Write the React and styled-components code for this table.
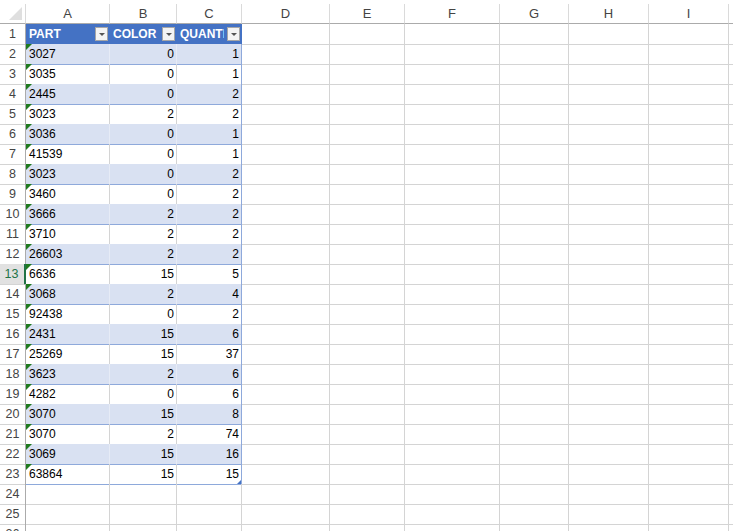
import React from 'react';
import styled, { createGlobalStyle, css } from 'styled-components';

const COLS = '26px 84px 67px 65px 88px 75px 95px 69px 80px 80px 80px';
const LETTERS = ['A', 'B', 'C', 'D', 'E', 'F', 'G', 'H', 'I', ''];

const DATA = [
  ['3027', 0, 1],
  ['3035', 0, 1],
  ['2445', 0, 2],
  ['3023', 2, 2],
  ['3036', 0, 1],
  ['41539', 0, 1],
  ['3023', 0, 2],
  ['3460', 0, 2],
  ['3666', 2, 2],
  ['3710', 2, 2],
  ['26603', 2, 2],
  ['6636', 15, 5],
  ['3068', 2, 4],
  ['92438', 0, 2],
  ['2431', 15, 6],
  ['25269', 15, 37],
  ['3623', 2, 6],
  ['4282', 0, 6],
  ['3070', 15, 8],
  ['3070', 2, 74],
  ['3069', 15, 16],
  ['63864', 15, 15],
];

const ACTIVE_ROW = 13;
const TOTAL_ROWS = 26;

const GlobalStyle = createGlobalStyle`
  html, body {
    margin: 0;
    padding: 0;
    background: #fff;
    overflow: hidden;
  }
  body {
    font-family: "Liberation Sans", Arial, sans-serif;
  }
`;

const Sheet = styled.div`
  width: 733px;
  height: 531px;
  overflow: hidden;
  padding-top: 4px;
  box-sizing: border-box;
  background: #fff;
`;

const Row = styled.div`
  display: grid;
  grid-template-columns: ${COLS};
  height: 20px;
`;

const Corner = styled.div`
  position: relative;
  box-sizing: border-box;
  border-right: 1px solid #dadada;
  border-bottom: 1px solid #ababab;
  &::after {
    content: '';
    position: absolute;
    right: 3px;
    bottom: 3px;
    width: 0;
    height: 0;
    border-left: 13px solid transparent;
    border-bottom: 13px solid #dfdfdf;
  }
`;

const ColHead = styled.div`
  box-sizing: border-box;
  border-right: 1px solid #dadada;
  border-bottom: 1px solid #ababab;
  color: #444;
  font-size: 13px;
  line-height: 19px;
  text-align: center;
`;

const RowHead = styled.div`
  box-sizing: border-box;
  border-right: 1px solid #ababab;
  border-bottom: 1px solid #d4d4d4;
  color: #444;
  font-size: 12.5px;
  line-height: 19px;
  padding-top: 1px;
  text-align: center;
  ${({ $active }) =>
    $active &&
    css`
      background: #e1e1e1;
      color: #217346;
      border-right: 2px solid #217346;
      padding-right: 1px;
    `}
`;

const Cell = styled.div`
  position: relative;
  box-sizing: border-box;
  border-right: 1px solid #d4d4d4;
  border-bottom: 1px solid #d4d4d4;
  font-size: 12px;
  line-height: 18px;
  padding: 1px 3px 0 3px;
  color: #000;
  white-space: nowrap;
  overflow: hidden;
  text-align: ${({ $num }) => ($num ? 'right' : 'left')};
  ${({ $num }) => $num && 'padding-right: 2px;'}
  ${({ $table }) =>
    $table &&
    css`
      border-bottom-color: #8ea9db;
    `}
  ${({ $band }) => $band && 'background: #d9e1f2;'}
  ${({ $band, $table }) => $band && $table && 'border-right-color: #e6ebf6;'}
  ${({ $edge }) => $edge && 'border-right-color: #8ea9db;'}
`;

const HeadCell = styled.div`
  position: relative;
  box-sizing: border-box;
  background: #4472c4;
  border-right: 1px solid #4472c4;
  border-bottom: 1px solid #8ea9db;
  color: #fff;
  font-weight: bold;
  font-size: 12px;
  line-height: 18px;
  padding: 1px 0 0 3px;
`;

const HeadLabel = styled.span`
  display: block;
  margin-right: 17px;
  white-space: nowrap;
  overflow: hidden;
`;

const FilterButton = styled.span`
  position: absolute;
  top: 3px;
  right: 1px;
  width: 13px;
  height: 14px;
  box-sizing: border-box;
  background: #f4f4f4;
  border: 1px solid #a6a6a6;
  display: flex;
  align-items: center;
  justify-content: center;
  &::after {
    content: '';
    width: 0;
    height: 0;
    border-left: 3px solid transparent;
    border-right: 3px solid transparent;
    border-top: 3px solid #555;
  }
`;

const TextFlag = styled.span`
  position: absolute;
  top: 0;
  left: 0;
  width: 0;
  height: 0;
  border-top: 6px solid #1f7a1f;
  border-right: 6px solid transparent;
`;

const ResizeHandle = styled.span`
  position: absolute;
  right: 0;
  bottom: 0;
  width: 0;
  height: 0;
  border-left: 4px solid transparent;
  border-bottom: 4px solid #4472c4;
`;

const emptyCells = (from, key) =>
  LETTERS.slice(from).map((l, i) => <Cell key={`${key}-${i}`} />);

export default function App() {
  const rows = [];

  rows.push(
    <Row key="h">
      <Corner />
      {LETTERS.map((l, i) => (
        <ColHead key={i}>{l}</ColHead>
      ))}
    </Row>
  );

  rows.push(
    <Row key="r1">
      <RowHead>1</RowHead>
      {['PART', 'COLOR', 'QUANTITY'].map((h) => (
        <HeadCell key={h}>
          <HeadLabel>{h}</HeadLabel>
          <FilterButton />
        </HeadCell>
      ))}
      {emptyCells(3, 'r1')}
    </Row>
  );

  DATA.forEach(([part, color, qty], i) => {
    const n = i + 2;
    const band = n % 2 === 0;
    const last = i === DATA.length - 1;
    rows.push(
      <Row key={`r${n}`}>
        <RowHead $active={n === ACTIVE_ROW}>{n}</RowHead>
        <Cell $table $band={band}>
          <TextFlag />
          {part}
        </Cell>
        <Cell $table $band={band} $num>
          {color}
        </Cell>
        <Cell $table $band={band} $num $edge>
          {qty}
          {last && <ResizeHandle />}
        </Cell>
        {emptyCells(3, `r${n}`)}
      </Row>
    );
  });

  for (let n = DATA.length + 2; n <= TOTAL_ROWS; n++) {
    rows.push(
      <Row key={`r${n}`}>
        <RowHead>{n}</RowHead>
        {emptyCells(0, `r${n}`)}
      </Row>
    );
  }

  return (
    <>
      <GlobalStyle />
      <Sheet>{rows}</Sheet>
    </>
  );
}
